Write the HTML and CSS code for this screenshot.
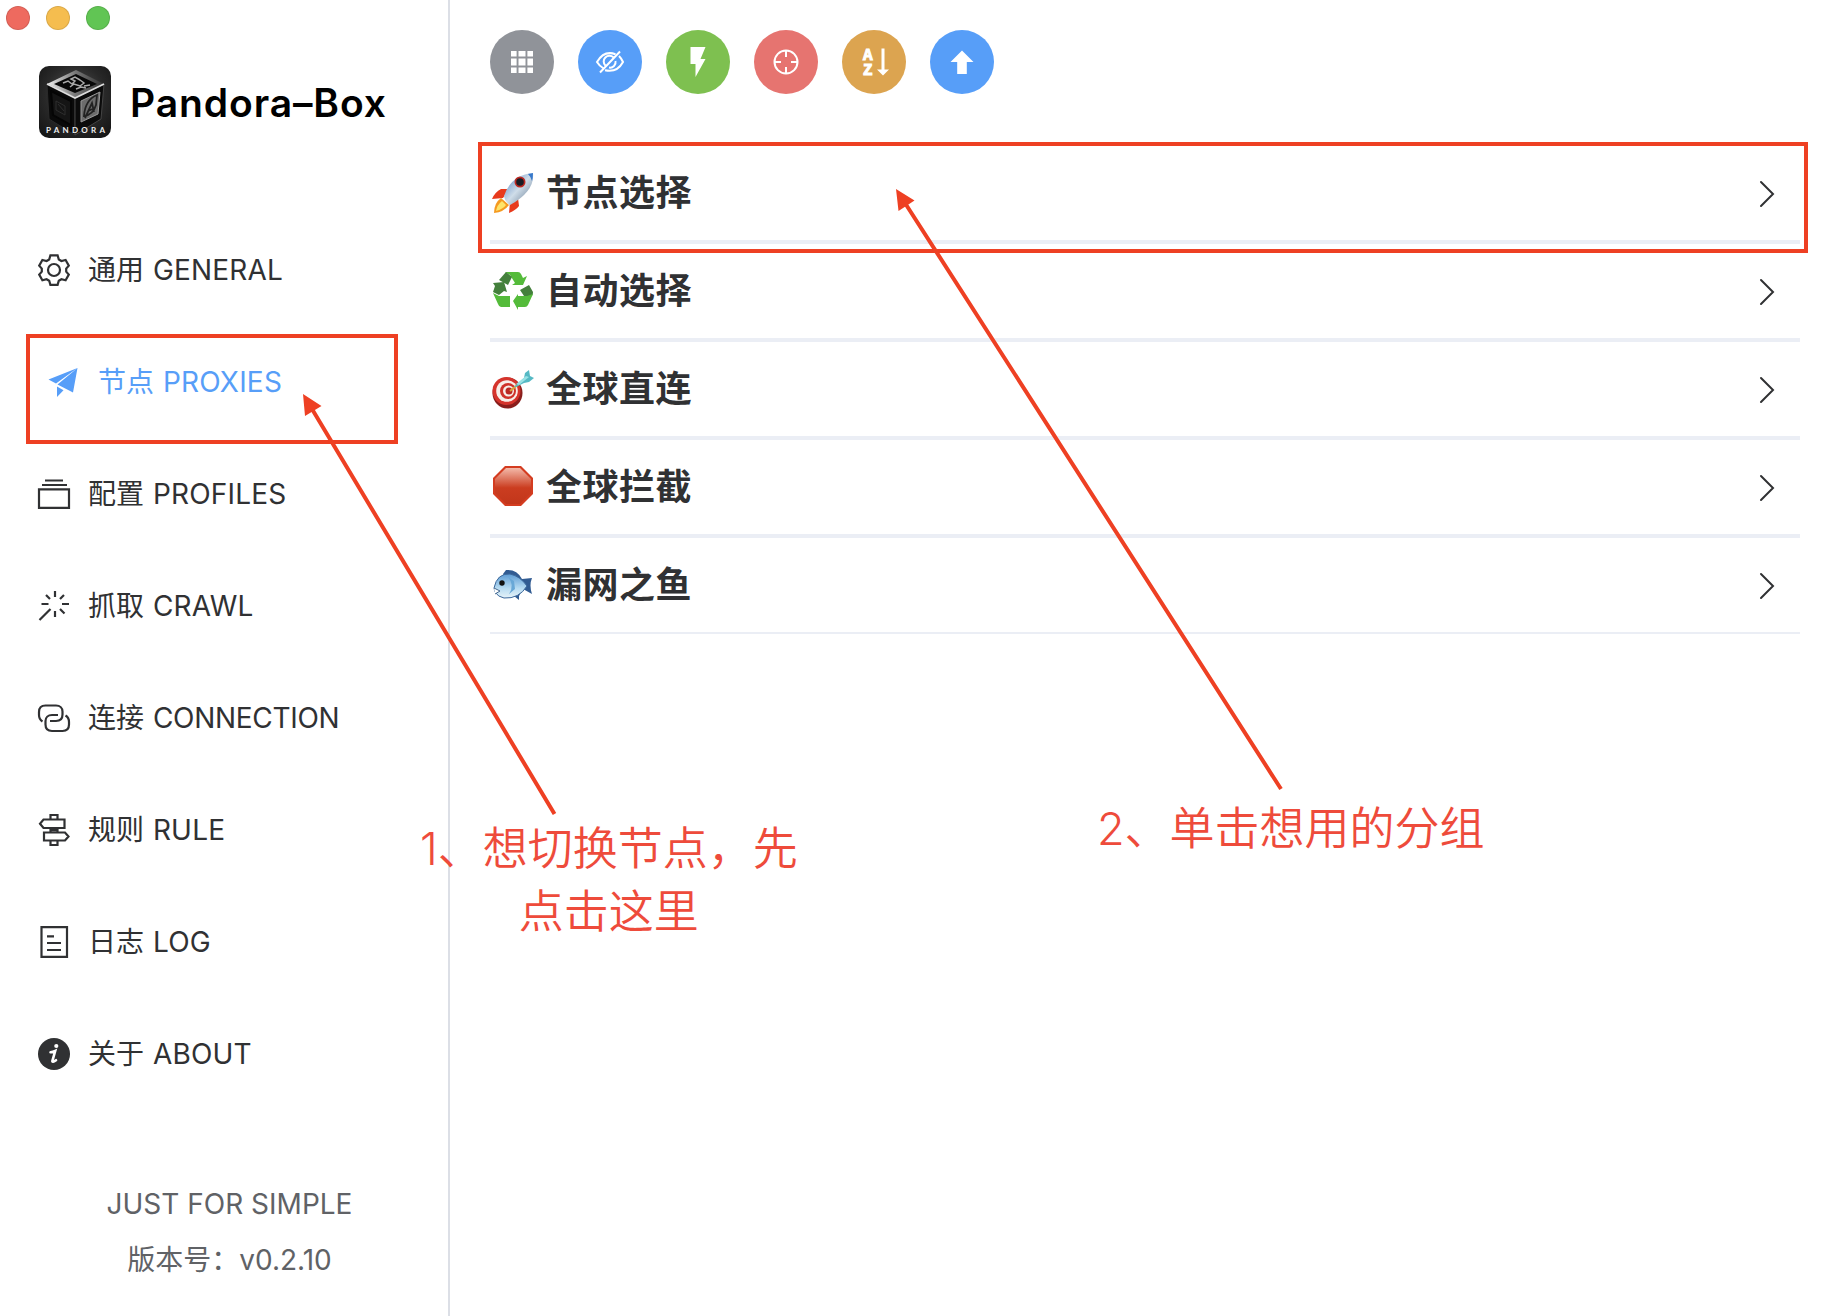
FILE: index.html
```html
<!DOCTYPE html>
<html lang="zh-CN">
<head>
<meta charset="utf-8">
<title>Pandora-Box</title>
<link rel="stylesheet" href="styles.css">
</head>
<body>
<div class="app">
  <aside class="sidebar">
    <div class="lights"><i class="light red"></i><i class="light amber"></i><i class="light green"></i></div>
    <div class="brand">
      <svg class="logo" viewBox="0 0 72 72">
        <defs>
          <radialGradient id="lbg" cx=".5" cy=".4" r=".7"><stop offset="0" stop-color="#555"/><stop offset=".6" stop-color="#282828"/><stop offset="1" stop-color="#161616"/></radialGradient>
          <linearGradient id="ltop" x1="0" x2="1"><stop offset="0" stop-color="#eee"/><stop offset=".5" stop-color="#777"/><stop offset="1" stop-color="#333"/></linearGradient>
        </defs>
        <rect width="72" height="72" rx="10" fill="url(#lbg)"/>
        <path d="M8 18 37 4 65 18 36 32Z" fill="url(#ltop)"/>
        <path d="M15 18 37 8 58 18 36 27Z" fill="#080808"/>
        <path d="M24 17l5-2 4 3 3-3-4-2 4-2 5 3M31 21l4-3 6 2 4-3-4-3M37 23l5-2 5 1M45 20l6-1" fill="none" stroke="#aaa" stroke-width="1.5"/>
        <path d="M8 18 36 32V69L10 53Z" fill="#0a0a0a" stroke="#2a2a2a"/>
        <path d="M12 25 32 35V59L14 49Z" fill="#151515" stroke="#050505" stroke-width="2"/>
        <path d="M17 35l9 5v9l-9-5zM19 38l6 7" fill="none" stroke="#2e2e2e"/>
        <path d="M65 18 36 32V69L62 53Z" fill="#0b0b0b" stroke="#444"/>
        <path d="M61 26 42 35V56L59 48Z" fill="#6c6c6c" stroke="#999"/>
        <path d="M58 29Q46 34 45 50q9-1 12-11zM46 52l7-15 2 9M49 45l7-3" fill="none" stroke="#222" stroke-width="1.8"/>
        <path d="M8 18 36 32 65 18" fill="none" stroke="#ddd" stroke-width="1.8"/>
        <text x="7" y="66.500" textLength="59" class="logo-text">PANDORA</text>
      </svg>
      <h1 class="brand-name">Pandora–Box</h1>
    </div>
    <nav class="menu">
      <a class="item"><svg class="icon" viewBox="0 0 32 32"><path d="M12.400 1.300h7.200l1.200 4.200 2.600 1.500 4.200-1 3.200 5.600-2.600 3v3l2.600 3-3.200 5.600-4.200-1-2.600 1.500-1.200 4.200h-7.200l-1.200-4.200L8.600 25.200l-4.200 1L1.200 20.600l2.600-3v-3L1.200 11.600 4.400 6l4.200 1 2.600-1.500z"/><circle cx="16" cy="16" r="6"/></svg><span>通用 <span class="en">GENERAL</span></span></a>
      <a class="item active"><svg class="icon" viewBox="0 0 32 32"><path class="fill" d="M.5 13.500 29.500 2 8 17.500ZM29.500 2 25 26.500 9.500 18.500ZM9 20.500 15.500 24.300 9 31Z"/></svg><span>节点 <span class="en">PROXIES</span></span></a>
      <a class="item"><svg class="icon" viewBox="0 0 32 32"><path d="M1 11.300h30v18.500H1zM4 7h25M7 2.500h18"/></svg><span>配置 <span class="en">PROFILES</span></span></a>
      <a class="item"><svg class="icon" viewBox="0 0 32 32"><path d="M17 1v6M17 21v6M3.500 14h7M24 14h7M8 5l4 4M26 5l-4 4M22 19l4.500 4.500M12.500 19 1.500 30"/></svg><span>抓取 <span class="en">CRAWL</span></span></a>
      <a class="item"><svg class="icon" viewBox="0 0 32 32"><path d="M4.500 19.500C2 18 1 16 1 13v-3c0-4 2.500-6.500 6.500-6.500h10.500c4 0 6.500 2.500 6.500 6v3c0 4-2.500 6.500-6.500 6.500H12M27.500 13.500C30 15 31 17 31 20v2.500c0 4-2.500 6.500-6.500 6.500H14c-4 0-6.500-2.500-6.500-6.500V19c0-3.500 2.500-6 6.500-6h6"/></svg><span>连接 <span class="en tight">CONNECTION</span></span></a>
      <a class="item"><svg class="icon" viewBox="0 0 32 32"><path d="M12.500 5V1h7v4M5.500 5.500h21v8.500h-21L2 9.800zM12.500 14v4.500M19.500 14v4.500M12.500 16.200h7M6 18.500h21l3.500 4-3.500 4H6zM12.500 26.500v4.500h7v-4.500"/></svg><span>规则 <span class="en">RULE</span></span></a>
      <a class="item"><svg class="icon" viewBox="0 0 32 32"><path d="M3.500 1.200h25.500v29.600h-25.500zM9 10.300h7M9 17h14M9 24h14"/></svg><span>日志 <span class="en">LOG</span></span></a>
      <a class="item"><svg class="icon" viewBox="0 0 32 32"><circle class="fill" cx="16" cy="16" r="16"/><circle cx="18.300" cy="8" r="2.100" class="white"/><path class="i" d="M12.500 14.200q2.600-.2 4.700-1.200l-2.800 9.800q-.5 2.300 3.600-.6"/></svg><span>关于 <span class="en">ABOUT</span></span></a>
    </nav>
    <footer class="foot"><p>JUST FOR SIMPLE</p><p>版本号：v0.2.10</p></footer>
  </aside>
  <main class="main">
    <div class="tools">
      <button class="tool grey"><svg viewBox="-32 -32 64 64"><path d="M-11-11h5.600v5.600H-11zM-3.500-11h7v5.600h-7zM5.400-11H11v5.600H5.400zM-11-3.500h5.600v7H-11zM-3.500-3.500h7v7h-7zM5.400-3.500H11v7H5.400zM-11 5.400h5.600V11H-11zM-3.500 5.400h7V11h-7zM5.400 5.400H11V11H5.400z"/></svg></button>
      <button class="tool blue"><svg class="line" viewBox="-32 -32 64 64"><path d="M5.500-7.800Q-6-12-13 0q2.500 4 6 6M9-6Q11.500-3.500 13 0 7 11-5 8.300M3.500-4.600A5.500 5.500 0 0 0-4.600 3.600M5.500-1A5.500 5.500 0 0 1-1 5.500M10-10.500-10 10.500"/></svg></button>
      <button class="tool green"><svg viewBox="-32 -32 64 64"><path d="M-7.500-15H7.500L2.500-3H7.500L-2.500 15V2h-5z"/></svg></button>
      <button class="tool rose"><svg class="line" viewBox="-32 -32 64 64"><circle r="11.500"/><path d="M0-11v6M0 5v6M-11 0h6M5 0h6"/></svg></button>
      <button class="tool gold"><svg viewBox="-32 -32 64 64"><text x="-11" y="-2" class="az">A</text><text x="-11" y="13" class="az">Z</text><path d="M7.500-13.500h3V7.500H15L9 13.500 3 7.500h4.500z"/></svg></button>
      <button class="tool blue"><svg viewBox="-32 -32 64 64"><path d="M0-11.500 11.500 0H4.800v12h-9.600V0H-11.500z"/></svg></button>
    </div>
    <div class="groups">
      <div class="group">
        <svg class="emoji" viewBox="0 0 42 42"><defs><linearGradient id="rk" x1="0" y1="0" x2="1" y2="1"><stop offset="0" stop-color="#4d7fc0"/><stop offset=".5" stop-color="#cfdde9"/><stop offset="1" stop-color="#5c7189"/></linearGradient></defs><path d="M17 16 9 16Q3 19 0 26l11-1zM26 25l1 8q-3 4-10 7l1-11z" fill="#e83a1c"/><path d="M9 25Q2 30 2 40q10-1 15-8z" fill="#f59a20"/><path d="M10 28q-5 4-6 10 7-2 10-6z" fill="#ffe469"/><path d="M12 23Q19 2 41 0q2 18-23 32-5-3-6-9z" fill="url(#rk)"/><path d="M36 1l5-1q0 5-1 8-1-4-4-7z" fill="#3879cb"/><circle cx="28" cy="9" r="5.500" fill="#bc2922"/><circle cx="28" cy="9" r="3.800" fill="#171c25"/></svg>
        <span>节点选择</span><svg class="chev" viewBox="0 0 16 28"><path d="M2 2 14 14 2 26"/></svg></div>
      <div class="group">
        <svg class="emoji" viewBox="0 0 42 42"><path d="M13 1h13q2 0 3 2l2 4 4-2-4 9H20l3-2-5-8z" fill="#54bb3a"/><path d="M14 1l6 5-4 8-9-5z" fill="#44803c"/><path d="M1 12l11-1 3 10-3-1-5 4-6-3 2-6z" fill="#44803c"/><path d="M1 22l6 3h11v11H9q-2 0-3-3z" fill="#54bb3a"/><path d="M28 19l9-5 4 7q0 5-3 4h-6z" fill="#44803c"/><path d="M41 23l-5 11q-1 2-3 2h-7v3l-5-9 5-7v2h9z" fill="#54bb3a"/></svg>
        <span>自动选择</span><svg class="chev" viewBox="0 0 16 28"><path d="M2 2 14 14 2 26"/></svg></div>
      <div class="group">
        <svg class="emoji" viewBox="0 0 42 42"><ellipse cx="15.500" cy="24" rx="15" ry="15.500" fill="#891e1c"/><ellipse cx="14.500" cy="22" rx="14" ry="14" fill="#d5342c"/><circle cx="15" cy="22" r="10.800" fill="#f7eee8"/><circle cx="16" cy="22" r="8" fill="#cf3229"/><circle cx="16.500" cy="22" r="5.500" fill="#f7eee8"/><circle cx="17" cy="22" r="3.500" fill="#b92823"/><path d="M18 22 28 14" stroke="#d7a53b" stroke-width="2"/><path d="M22 18 32 9l1-5 4-3 1 6 4 2-5 4-5 1-8 4z" fill="#55b9c4"/><path d="M24 15 34 7l3 1-10 8z" fill="#99e2e5"/></svg>
        <span>全球直连</span><svg class="chev" viewBox="0 0 16 28"><path d="M2 2 14 14 2 26"/></svg></div>
      <div class="group">
        <svg class="emoji" viewBox="0 0 42 42"><defs><linearGradient id="st" x2="0" y2="1"><stop offset="0" stop-color="#f3b9a9"/><stop offset=".55" stop-color="#cb3d20"/><stop offset="1" stop-color="#c2361b"/></linearGradient></defs><path d="M13-1h16l12 12v16L29 39H13L1 27V11z" fill="#d43c20"/><path d="M14 1h14l11 11v14L28 37H14L3 26V12z" fill="url(#st)"/></svg>
        <span>全球拦截</span><svg class="chev" viewBox="0 0 16 28"><path d="M2 2 14 14 2 26"/></svg></div>
      <div class="group">
        <svg class="emoji" viewBox="0 0 42 42"><defs><linearGradient id="fs" x2="0" y2="1"><stop offset="0" stop-color="#5c9bd4"/><stop offset=".6" stop-color="#b8dcf2"/><stop offset="1" stop-color="#e6f2f8"/></linearGradient></defs><path d="M11 9 14 5q11-1 16 9l10-1q-3 7 0 16l-9-5-4 7v4l-5-4z" fill="#315b92"/><path d="M2 23Q5 8 18 9q10 2 17 12-8 13-23 12-6-1-9-6z" fill="url(#fs)" stroke="#3c689b"/><path d="M2 23l6 3-5 3" fill="#fff" stroke="#456890"/><path d="M16 12q7 8 1 17l6-5-1-8z" fill="#69a8d7"/><circle cx="10" cy="18" r="2.700" fill="#111"/></svg>
        <span>漏网之鱼</span><svg class="chev" viewBox="0 0 16 28"><path d="M2 2 14 14 2 26"/></svg></div>
    </div>
  </main>
  <div class="mark mark-nav"></div>
  <div class="mark mark-group"></div>
  <svg class="arrows" viewBox="0 0 1832 1316"><path class="shaft" d="M554.500 814 312 409M1281 789 905 203"/><path d="M303 394 321.500 406 305 416zM896 189 914.500 200.500 898.500 211z"/></svg>
  <p class="note note-one">1、想切换节点，先<br>点击这里</p>
  <p class="note note-two">2、单击想用的分组</p>
</div>
</body>
</html>
```
FILE: styles.css
```css
* { box-sizing: border-box; }
body { margin: 0; background: #fff; font-family: "Inter", "Noto Sans CJK SC", sans-serif; color: #303133; }
p, h1 { margin: 0; }
.app { position: relative; display: flex; width: 1832px; height: 1316px; overflow: hidden; }

.sidebar { width: 450px; border-right: 2px solid #dcdfe6; display: flex; flex-direction: column; }
.lights { display: flex; gap: 16px; padding: 6px 6px 0; height: 66px; }
.light { width: 24px; height: 24px; border-radius: 50%; border: 1px solid #0000001c; }
.red { background: #ee6a5f; }
.amber { background: #f5bd4f; }
.light.green { background: #61c554; }
.brand { display: flex; align-items: center; gap: 19px; height: 72px; padding-left: 39px; }
.logo { width: 72px; height: 72px; }
.logo-text { font: bold 8px "Lato", sans-serif; fill: #eee; }
.brand-name { font: 600 39px/72px "Inter", sans-serif; color: #000; letter-spacing: 0.9px; white-space: nowrap; padding-top: 2px; }
.menu { margin-top: 76px; }
.item { display: flex; align-items: center; gap: 18px; height: 112px; padding-left: 38px; font-size: 28px; line-height: 40px; white-space: nowrap; }
.item > span { padding-bottom: 1px; }
.item.active { padding-left: 48px; color: #579ef8; }
.en { margin-left: 1px; letter-spacing: 0.2px; }
.en.tight { letter-spacing: -0.3px; }
.icon { width: 32px; height: 32px; fill: none; stroke: currentColor; stroke-width: 2.2; overflow: visible; }
.icon .fill { fill: currentColor; stroke: none; }
.icon .white { fill: #fff; stroke: none; }
.icon .i { stroke: #fff; stroke-width: 2.6; stroke-linecap: round; }
.foot { margin-top: 66px; padding-left: 11px; text-align: center; font-size: 28px; line-height: 56px; color: #606266; }

.main { flex: 1; padding: 30px 32px 0 40px; }
.tools { display: flex; gap: 24px; }
.tool { width: 64px; height: 64px; border: 0; border-radius: 50%; padding: 0; }
.tool svg { display: block; width: 64px; height: 64px; fill: #fff; }
.tool .line { fill: none; stroke: #fff; stroke-width: 2; }
.az { font: bold 16px "Liberation Mono", monospace; stroke: #fff; stroke-width: 1; }
.grey { background: #909399; }
.blue { background: #579ef8; }
.tool.green { background: #7ec050; }
.rose { background: #e67470; }
.gold { background: #dca450; }

.groups { margin-top: 52px; }
.group { display: flex; align-items: center; height: 98px; border-bottom: 4px solid #ebeef5; padding: 2px 25px 0 2px; font-size: 36px; font-weight: 700; }
.group:last-child { height: 96px; border-bottom-width: 2px; }
.emoji { width: 42px; height: 42px; margin-right: 12px; overflow: visible; }
.group span { flex: 1; line-height: 52px; padding-bottom: 2px; letter-spacing: 0.5px; }
.chev { width: 16px; height: 28px; fill: none; stroke: #303133; stroke-width: 2; stroke-linecap: round; }

.mark { position: absolute; border: 4px solid #ee4023; }
.mark-nav { left: 26px; top: 334px; width: 372px; height: 110px; }
.mark-group { left: 478px; top: 142px; width: 1330px; height: 111px; }
.arrows { position: absolute; inset: 0; width: 1832px; height: 1316px; fill: #ee4023; pointer-events: none; }
.shaft { stroke: #ee4023; stroke-width: 4; fill: none; }
.note { position: absolute; font-size: 45px; line-height: 63px; font-weight: 350; color: #ee4b3b; text-align: center; white-space: nowrap; }
.note-one { left: 420px; top: 817px; }
.note-two { left: 1097px; top: 797px; }
```
